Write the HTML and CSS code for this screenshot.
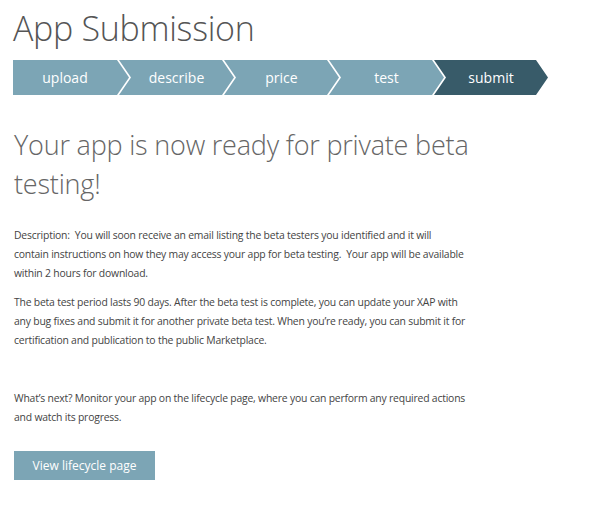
FILE: index.html
```html
<!DOCTYPE html>
<html>
<head>
<meta charset="utf-8">
<link rel="stylesheet" href="styles.css">
</head>
<body>
<div class="page">
  <h1 class="title">App Submission</h1>
  <nav class="steps">
    <div class="step step-first">upload</div>
    <div class="step">describe</div>
    <div class="step">price</div>
    <div class="step">test</div>
    <div class="step step-last step-active">submit</div>
  </nav>
  <div class="content">
    <h2 class="heading">Your app is now ready for private beta<br>testing!</h2>
    <p class="text">Description:&nbsp; You will soon receive an email listing the beta testers you identified and it will<br>contain instructions on how they may access your app for beta testing.&nbsp; Your app will be available<br>within 2 hours for download.</p>
    <p class="text">The beta test period lasts 90 days. After the beta test is complete, you can update your XAP with<br>any bug fixes and submit it for another private beta test. When you’re ready, you can submit it for<br>certification and publication to the public Marketplace.</p>
    <p class="text next">What’s next? Monitor your app on the lifecycle page, where you can perform any required actions<br>and watch its progress.</p>
    <a class="button" href="#">View lifecycle page</a>
  </div>
</div>
</body>
</html>
```
FILE: styles.css
```css
html, body {
  margin: 0;
  padding: 0;
  background: #ffffff;
}
body {
  font-family: "Open Sans", "Liberation Sans", sans-serif;
}
.page {
  padding: 0 0 0 13px;
}
.title {
  margin: 0;
  padding-top: 4px;
  font-weight: 300;
  font-size: 34px;
  line-height: 48px;
  color: #555555;
  letter-spacing: -0.3px;
}
.steps {
  display: flex;
  margin-top: 8px;
  height: 35px;
}
.step {
  display: flex;
  align-items: center;
  justify-content: center;
  box-sizing: border-box;
  width: 115px;
  height: 35px;
  margin-left: -10px;
  padding: 0 12px;
  background: #7ca5b5;
  color: #ffffff;
  font-size: 14px;
  clip-path: polygon(0 0, calc(100% - 12px) 0, 100% 50%, calc(100% - 12px) 100%, 0 100%, 12px 50%);
}
.step-first {
  margin-left: 0;
  width: 116px;
  padding-left: 0;
  clip-path: polygon(0 0, calc(100% - 12px) 0, 100% 50%, calc(100% - 12px) 100%, 0 100%);
}
.step-active {
  background: #385b69;
}
.step-last {
  width: 114px;
}
.content {
  padding-left: 1px;
}
.heading {
  margin: 30px 0 0 0;
  font-weight: 300;
  font-size: 27px;
  line-height: 39px;
  color: #666666;
  letter-spacing: -0.2px;
}
.text {
  margin: 23px 0 0 0;
  font-size: 10.4px;
  letter-spacing: -0.2px;
  line-height: 19px;
  color: #444444;
}
.text + .text {
  margin-top: 10px;
}
.text.next {
  margin-top: 39px;
}
.button {
  display: inline-block;
  margin-top: 24px;
  width: 141px;
  height: 29px;
  line-height: 29px;
  text-align: center;
  background: #7ca5b5;
  color: #ffffff;
  font-size: 12px;
  text-decoration: none;
}
```
